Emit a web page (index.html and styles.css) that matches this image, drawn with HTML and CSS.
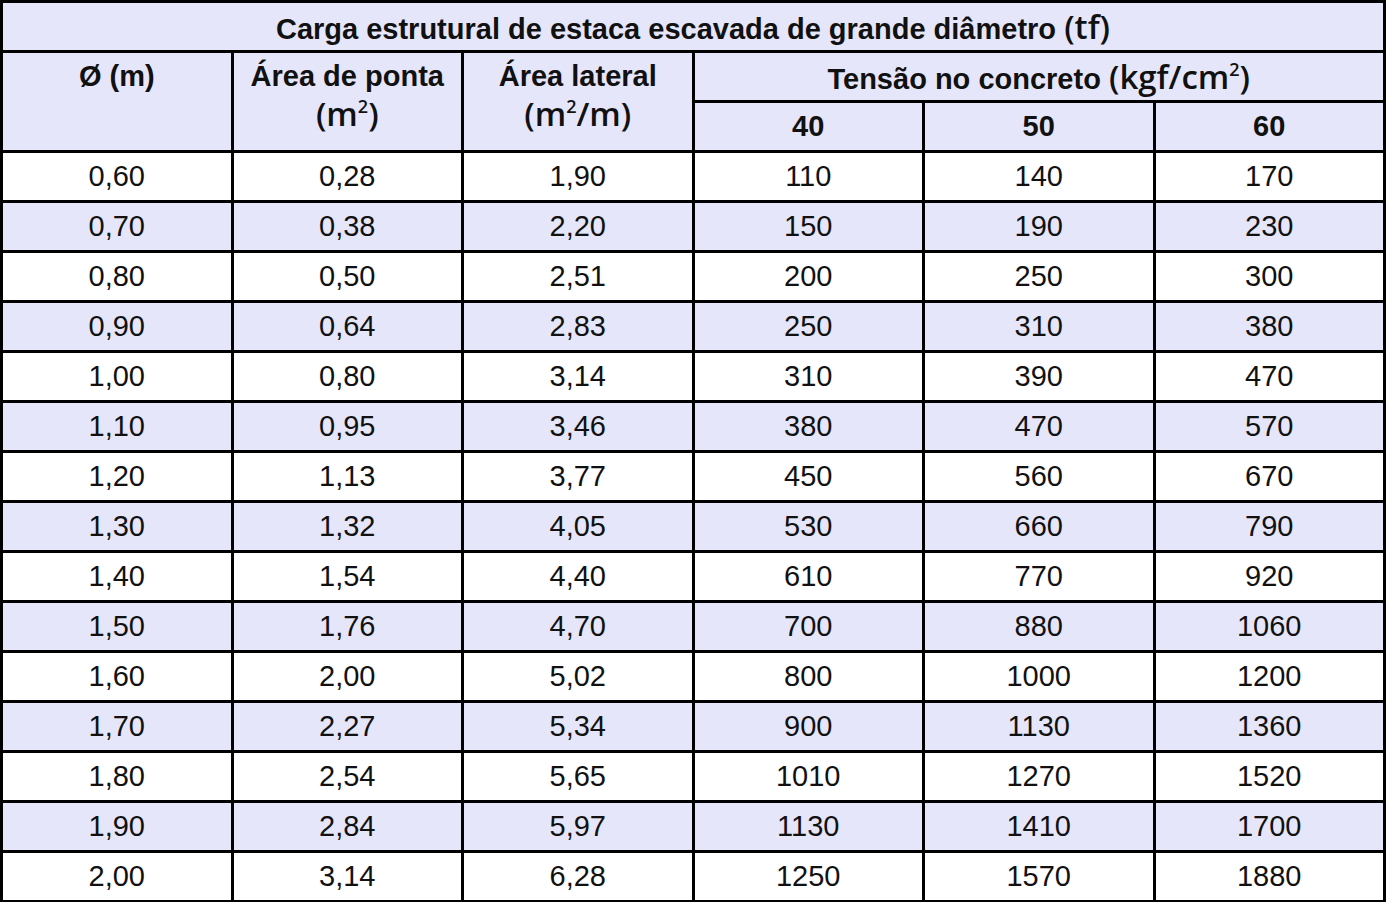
FILE: index.html
```html
<!DOCTYPE html>
<html lang="pt">
<head>
<meta charset="utf-8">
<title>Carga estrutural</title>
<link rel="stylesheet" href="styles.css">
</head>
<body>
<table class="tbl">
  <colgroup>
    <col class="c"><col class="c"><col class="c"><col class="c"><col class="c"><col class="c">
  </colgroup>
  <thead>
    <tr class="title-row">
      <th colspan="6">Carga estrutural de estaca escavada de grande diâmetro <span class="par">(tf)</span></th>
    </tr>
    <tr class="h1">
      <th rowspan="2" class="top">Ø (m)</th>
      <th rowspan="2" class="top">Área de ponta<br><span class="par">(m<sup>2</sup>)</span></th>
      <th rowspan="2" class="top">Área lateral<br><span class="par">(m<sup>2</sup>/m)</span></th>
      <th colspan="3">Tensão no concreto <span class="par">(kgf/cm<sup>2</sup>)</span></th>
    </tr>
    <tr class="h2">
      <th>40</th><th>50</th><th>60</th>
    </tr>
  </thead>
  <tbody>
    <tr><td>0,60</td><td>0,28</td><td>1,90</td><td>110</td><td>140</td><td>170</td></tr>
    <tr class="alt"><td>0,70</td><td>0,38</td><td>2,20</td><td>150</td><td>190</td><td>230</td></tr>
    <tr><td>0,80</td><td>0,50</td><td>2,51</td><td>200</td><td>250</td><td>300</td></tr>
    <tr class="alt"><td>0,90</td><td>0,64</td><td>2,83</td><td>250</td><td>310</td><td>380</td></tr>
    <tr><td>1,00</td><td>0,80</td><td>3,14</td><td>310</td><td>390</td><td>470</td></tr>
    <tr class="alt"><td>1,10</td><td>0,95</td><td>3,46</td><td>380</td><td>470</td><td>570</td></tr>
    <tr><td>1,20</td><td>1,13</td><td>3,77</td><td>450</td><td>560</td><td>670</td></tr>
    <tr class="alt"><td>1,30</td><td>1,32</td><td>4,05</td><td>530</td><td>660</td><td>790</td></tr>
    <tr><td>1,40</td><td>1,54</td><td>4,40</td><td>610</td><td>770</td><td>920</td></tr>
    <tr class="alt"><td>1,50</td><td>1,76</td><td>4,70</td><td>700</td><td>880</td><td>1060</td></tr>
    <tr><td>1,60</td><td>2,00</td><td>5,02</td><td>800</td><td>1000</td><td>1200</td></tr>
    <tr class="alt"><td>1,70</td><td>2,27</td><td>5,34</td><td>900</td><td>1130</td><td>1360</td></tr>
    <tr><td>1,80</td><td>2,54</td><td>5,65</td><td>1010</td><td>1270</td><td>1520</td></tr>
    <tr class="alt"><td>1,90</td><td>2,84</td><td>5,97</td><td>1130</td><td>1410</td><td>1700</td></tr>
    <tr><td>2,00</td><td>3,14</td><td>6,28</td><td>1250</td><td>1570</td><td>1880</td></tr>
  </tbody>
</table>
</body>
</html>
```

FILE: styles.css
```css
html, body {
  margin: 0;
  padding: 0;
  background: #ffffff;
  overflow: hidden;
}

.tbl {
  border-collapse: collapse;
  table-layout: fixed;
  width: 1386px;
  font-family: "Liberation Sans", Arial, sans-serif;
  font-size: 29px;
  color: #111111;
}

.tbl th,
.tbl td {
  border: 3px solid #000000;
  padding: 0;
  text-align: center;
  vertical-align: middle;
  box-sizing: border-box;
  line-height: 1;
}

.tbl th {
  background: #e6e6fa;
  font-weight: bold;
  height: 50px;
}

.tbl th.top {
  vertical-align: top;
  padding-top: 4px;
  line-height: 38px;
}

.par {
  font-family: "Open Sans", sans-serif;
  font-weight: 600;
  font-size: 33px;
}

.par sup {
  font-size: 18px;
  vertical-align: 0;
  position: relative;
  top: -13px;
  line-height: 0;
}

.tbl td {
  height: 50px;
  background: #ffffff;
}

.tbl tr.alt td {
  background: #e6e6fa;
}
```
